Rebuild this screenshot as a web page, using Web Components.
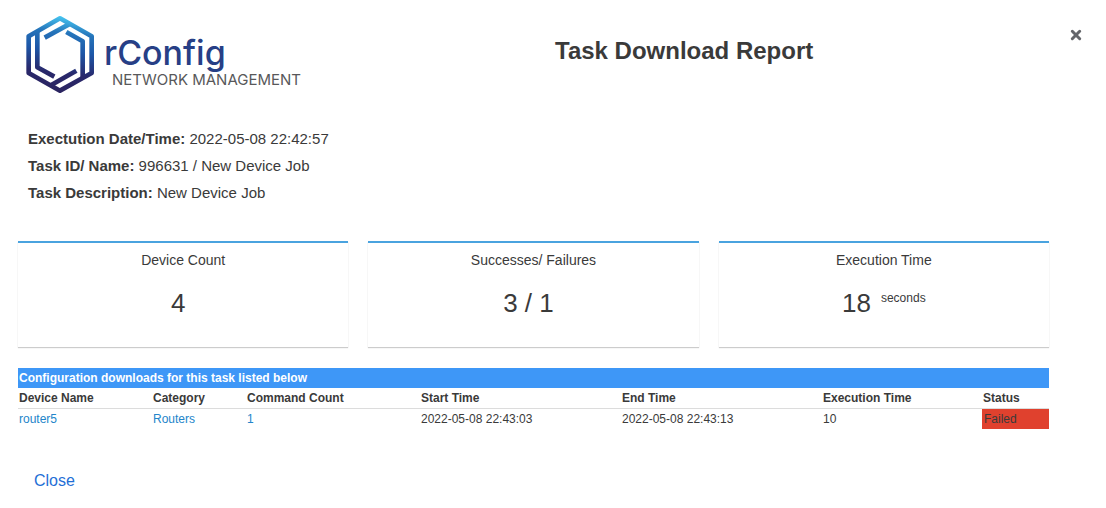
<!DOCTYPE html>
<html lang="en">
<head>
<meta charset="utf-8">
<meta name="viewport" content="width=device-width, initial-scale=1">
<title>Task Download Report</title>
<style>
  body {
    margin: 0;
    background: #fff;
    color: #3a3a3a;
    font-family: "Liberation Sans", Arial, Helvetica, sans-serif;
  }
</style>
</head>
<body>
<task-report>
  <report-header slot="header">Task Download Report</report-header>
  <report-detail slot="details" label="Exectution Date/Time:">2022-05-08 22:42:57</report-detail>
  <report-detail slot="details" label="Task ID/ Name:">996631 / New Device Job</report-detail>
  <report-detail slot="details" label="Task Description:">New Device Job</report-detail>
  <stat-card slot="stats" label="Device Count">4</stat-card>
  <stat-card slot="stats" label="Successes/ Failures">3 / 1</stat-card>
  <stat-card slot="stats" label="Execution Time" unit="seconds">18</stat-card>
  <download-table></download-table>
</task-report>

<script>
function attach(element, html) {
  const template = document.createElement('template');
  template.innerHTML = html;
  element.attachShadow({ mode: 'open' });
  element.shadowRoot.appendChild(template.content.cloneNode(true));
}

class RconfigLogo extends HTMLElement {
  constructor() {
    super();
    attach(this, `
      <style>
        :host { display: block; }
        svg { display: block; }
        text { font-family: Inter, "Liberation Sans", sans-serif; }
        .name { font-size: 34px; font-weight: 500; fill: #273f86; }
        .tagline { font-size: 15px; fill: #58585a; }
      </style>
      <svg width="284" height="84" viewBox="0 0 284 84" role="img" aria-label="rConfig Network Management">
        <defs>
          <linearGradient id="blue" gradientUnits="userSpaceOnUse" x1="130" y1="12" x2="100" y2="240">
            <stop offset="0" stop-color="#48c9f3"/>
            <stop offset="0.22" stop-color="#2574ba"/>
            <stop offset="0.45" stop-color="#1d57a8"/>
            <stop offset="0.75" stop-color="#29286b"/>
            <stop offset="1" stop-color="#2b2460"/>
          </linearGradient>
        </defs>
        <g transform="scale(0.3333)" fill="none" stroke="url(#blue)" stroke-width="14" stroke-linejoin="round">
          <path d="M114 19 L209 73 V183 L114 236 L20 183 V73 Z"/>
          <path d="M46 58 V166 L97 194"/>
          <path d="M182 197 V88 L133 60"/>
          <path d="M68 77 L146 34"/>
          <path d="M163 176 L84 221"/>
        </g>
        <text class="name" x="82" y="53">rConfig</text>
        <text class="tagline" x="90" y="73">NETWORK MANAGEMENT</text>
      </svg>
    `);
  }
}

class ReportHeader extends HTMLElement {
  constructor() {
    super();
    attach(this, `
      <style>
        :host {
          display: grid;
          grid-template-columns: 1fr 1fr;
          column-gap: 4px;
          align-items: start;
          padding-top: 12px;
        }
        rconfig-logo { padding-left: 22px; }
        .bar {
          display: flex;
          justify-content: space-between;
          align-items: flex-start;
          padding: 16px 24px 0 0;
        }
        h1 {
          margin: 8px 0 0;
          font-size: 24px;
          line-height: 30px;
        }
        button {
          display: block;
          padding: 0;
          border: 0;
          background: none;
          color: #64666b;
          cursor: pointer;
        }
        svg { display: block; }
      </style>
      <rconfig-logo></rconfig-logo>
      <div class="bar">
        <h1><slot></slot></h1>
        <button type="button" aria-label="Close report">
          <svg width="12" height="14" viewBox="0 0 12 14">
            <path d="M2.3 3.3 L9.7 10.7 M9.7 3.3 L2.3 10.7" stroke="currentColor" stroke-width="3" stroke-linecap="round"/>
          </svg>
        </button>
      </div>
    `);
  }
}

class ReportDetail extends HTMLElement {
  constructor() {
    super();
    attach(this, `
      <style>
        :host {
          display: block;
          font-size: 15px;
          line-height: 27px;
        }
      </style>
      <strong></strong>
      <slot></slot>
    `);
  }

  connectedCallback() {
    this.shadowRoot.querySelector('strong').textContent = this.getAttribute('label');
  }
}

class StatCard extends HTMLElement {
  constructor() {
    super();
    attach(this, `
      <style>
        :host {
          display: block;
          padding: 7px 0 29px;
          border-top: 2px solid #4aa3df;
          box-shadow: 0 1px 1px rgba(0, 0, 0, 0.2);
          text-align: center;
        }
        .label {
          font-size: 14px;
          line-height: 20px;
        }
        .value {
          display: flex;
          justify-content: center;
          margin-top: 18px;
          font-size: 26px;
          line-height: 30px;
        }
        .number { margin-right: 10px; }
        .unit {
          font-size: 12px;
          line-height: 20px;
        }
      </style>
      <div class="label"></div>
      <div class="value">
        <span class="number"><slot></slot></span>
        <span class="unit"></span>
      </div>
    `);
  }

  connectedCallback() {
    this.shadowRoot.querySelector('.label').textContent = this.getAttribute('label');
    this.shadowRoot.querySelector('.unit').textContent = this.getAttribute('unit') || '';
  }
}

class DownloadTable extends HTMLElement {
  constructor() {
    super();
    attach(this, `
      <style>
        :host {
          display: block;
          font-size: 12px;
          line-height: 20px;
        }
        table {
          width: 100%;
          table-layout: fixed;
          border-collapse: collapse;
        }
        caption {
          padding-left: 1px;
          background: #3e97f7;
          color: #fff;
          font-weight: bold;
          text-align: left;
        }
        th, td {
          padding: 0 0 0 1px;
          text-align: left;
        }
        th { border-bottom: 1px solid #dcdcdc; }
        a {
          color: #2385ca;
          text-decoration: none;
        }
        .failed {
          padding-left: 2px;
          background: #e0412e;
        }
        .device { width: 134px; }
        .category { width: 94px; }
        .count { width: 174px; }
        .time { width: 201px; }
        .duration { width: 160px; }
        .status { width: 67px; }
      </style>
      <table>
        <caption>Configuration downloads for this task listed below</caption>
        <colgroup>
          <col class="device">
          <col class="category">
          <col class="count">
          <col class="time">
          <col class="time">
          <col class="duration">
          <col class="status">
        </colgroup>
        <thead>
          <tr>
            <th scope="col">Device Name</th>
            <th scope="col">Category</th>
            <th scope="col">Command Count</th>
            <th scope="col">Start Time</th>
            <th scope="col">End Time</th>
            <th scope="col">Execution Time</th>
            <th scope="col">Status</th>
          </tr>
        </thead>
        <tbody>
          <tr>
            <td><a href="#router5">router5</a></td>
            <td><a href="#routers">Routers</a></td>
            <td><a href="#commands">1</a></td>
            <td>2022-05-08 22:43:03</td>
            <td>2022-05-08 22:43:13</td>
            <td>10</td>
            <td class="failed">Failed</td>
          </tr>
        </tbody>
      </table>
    `);
  }
}

class TaskReport extends HTMLElement {
  constructor() {
    super();
    attach(this, `
      <style>
        :host { display: block; }
        .details { padding: 29px 28px 35px; }
        main { padding: 0 57px 0 18px; }
        .stats {
          display: grid;
          grid-template-columns: repeat(3, 1fr);
          gap: 20px;
          margin-bottom: 21px;
        }
        footer { padding: 40px 34px 16px; }
        button {
          padding: 0;
          border: 0;
          background: none;
          color: #1f6fd6;
          font: inherit;
          font-size: 16px;
          line-height: 24px;
          cursor: pointer;
        }
      </style>
      <slot name="header"></slot>
      <div class="details"><slot name="details"></slot></div>
      <main>
        <div class="stats"><slot name="stats"></slot></div>
        <slot></slot>
      </main>
      <footer><button type="button">Close</button></footer>
    `);
  }
}

customElements.define('rconfig-logo', RconfigLogo);
customElements.define('report-header', ReportHeader);
customElements.define('report-detail', ReportDetail);
customElements.define('stat-card', StatCard);
customElements.define('download-table', DownloadTable);
customElements.define('task-report', TaskReport);
</script>
</body>
</html>
